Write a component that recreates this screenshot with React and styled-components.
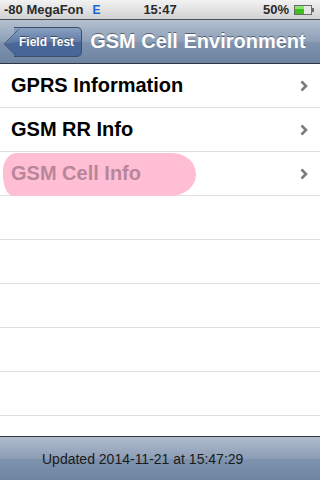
import React from "react";
import styled, { createGlobalStyle } from "styled-components";

const GlobalStyle = createGlobalStyle`
  html, body {
    margin: 0;
    padding: 0;
    background: #fff;
  }
  body {
    font-family: "Liberation Sans", Arial, sans-serif;
  }
`;

const Screen = styled.div`
  width: 320px;
  height: 480px;
  display: flex;
  flex-direction: column;
  overflow: hidden;
  background: #fff;
`;

const StatusBar = styled.div`
  height: 20px;
  box-sizing: border-box;
  display: flex;
  align-items: center;
  justify-content: space-between;
  padding: 0 5px 0 4px;
  background: linear-gradient(#f2f2f2, #d2d2d2);
  border-bottom: 1px solid #4d4d4d;
  font-size: 13px;
  font-weight: bold;
  color: #2a2a2a;
  position: relative;
`;

const Carrier = styled.div`
  display: flex;
  align-items: center;
  gap: 9px;
`;

const NetType = styled.span`
  color: #1c64d6;
  font-size: 12px;
`;

const Clock = styled.div`
  position: absolute;
  left: 0;
  right: 0;
  text-align: center;
  pointer-events: none;
`;

const Battery = styled.div`
  display: flex;
  align-items: center;
  gap: 5px;
`;

const NavBar = styled.div`
  height: 44px;
  box-sizing: border-box;
  display: flex;
  align-items: center;
  padding: 0 5px;
  gap: 8px;
  background: linear-gradient(#b4c0d0 0%, #8d9fb7 50%, #7f93ae 51%, #6d84a2 100%);
  border-bottom: 1px solid #2d3642;
`;

const BackButton = styled.div`
  position: relative;
  height: 30px;
  margin-left: 9px;
  padding: 0 7px 0 5px;
  display: flex;
  align-items: center;
  background: linear-gradient(#8aa0c2 0%, #5e7ba5 50%, #4a6898 51%, #46669a 100%);
  border: 1px solid #3b4f6d;
  border-left: none;
  border-radius: 0 5px 5px 0;
  color: #fff;
  font-size: 12px;
  font-weight: bold;
  text-shadow: 0 -1px 0 rgba(0, 0, 0, 0.45);
  box-sizing: border-box;

  &::before {
    content: "";
    position: absolute;
    left: -8px;
    top: 3px;
    width: 21px;
    height: 21px;
    transform: rotate(45deg) scaleX(0.75);
    transform-origin: center;
    background: linear-gradient(135deg, #8aa0c2 0%, #5e7ba5 48%, #4a6898 52%, #46669a 100%);
    border-left: 1px solid #3b4f6d;
    border-bottom: 1px solid #3b4f6d;
    border-radius: 0 0 0 3px;
    z-index: 0;
  }

  span {
    position: relative;
    z-index: 1;
  }
`;

const Title = styled.div`
  color: #fff;
  font-size: 20px;
  font-weight: bold;
  white-space: nowrap;
  text-shadow: 0 -1px 0 rgba(0, 0, 0, 0.45);
`;

const List = styled.div`
  flex: 1;
  overflow: hidden;
`;

const Row = styled.div`
  position: relative;
  height: 44px;
  box-sizing: border-box;
  border-bottom: 1px solid #e0e0e0;
  display: flex;
  align-items: center;
  padding: 0 12px 0 11px;
`;

const Highlight = styled.div`
  position: absolute;
  left: 3px;
  top: 1px;
  width: 193px;
  height: 43px;
  background: #ffbed3;
  border-radius: 14px 24px 26px 10px / 18px 22px 22px 22px;
`;

const Label = styled.div`
  position: relative;
  flex: 1;
  font-size: 20px;
  font-weight: bold;
  color: ${(p) => (p.$muted ? "#b8869a" : "#000")};
`;

const Chevron = styled.svg`
  position: relative;
  width: 8px;
  height: 12px;
`;

const Toolbar = styled.div`
  height: 44px;
  box-sizing: border-box;
  display: flex;
  align-items: center;
  padding-left: 42px;
  background: linear-gradient(#b0bccd 0%, #8c9db5 50%, #7f93ae 51%, #6d84a2 100%);
  border-top: 1px solid #2d3642;
  font-size: 14px;
  color: #1a1a1a;
`;

const rows = [
  { label: "GPRS Information" },
  { label: "GSM RR Info" },
  { label: "GSM Cell Info", marked: true },
  {}, {}, {}, {}, {}, {},
];

function Arrow() {
  return (
    <Chevron viewBox="0 0 8 12">
      <path d="M1.5 1.5 L6 6 L1.5 10.5" fill="none" stroke="#7b7b7b" strokeWidth="2.6" />
    </Chevron>
  );
}

function BatteryIcon() {
  return (
    <svg width="21" height="10" viewBox="0 0 21 10">
      <rect x="0.5" y="0.5" width="17" height="9" fill="#e6e6e6" stroke="#6a6a6a" />
      <rect x="1" y="1" width="9" height="8" fill="#3fbf1c" />
      <rect x="1" y="1" width="9" height="3" fill="#8ce36a" />
      <rect x="18" y="3" width="2" height="4" fill="#6a6a6a" />
    </svg>
  );
}

export default function App() {
  return (
    <Screen>
      <GlobalStyle />
      <StatusBar>
        <Carrier>
          <span>-80 MegaFon</span>
          <NetType>E</NetType>
        </Carrier>
        <Clock>15:47</Clock>
        <Battery>
          <span>50%</span>
          <BatteryIcon />
        </Battery>
      </StatusBar>
      <NavBar>
        <BackButton>
          <span>Field Test</span>
        </BackButton>
        <Title>GSM Cell Environment</Title>
      </NavBar>
      <List>
        {rows.map((r, i) => (
          <Row key={i}>
            {r.marked && <Highlight />}
            {r.label && <Label $muted={r.marked}>{r.label}</Label>}
            {r.label && <Arrow />}
          </Row>
        ))}
      </List>
      <Toolbar>Updated 2014-11-21 at 15:47:29</Toolbar>
    </Screen>
  );
}
